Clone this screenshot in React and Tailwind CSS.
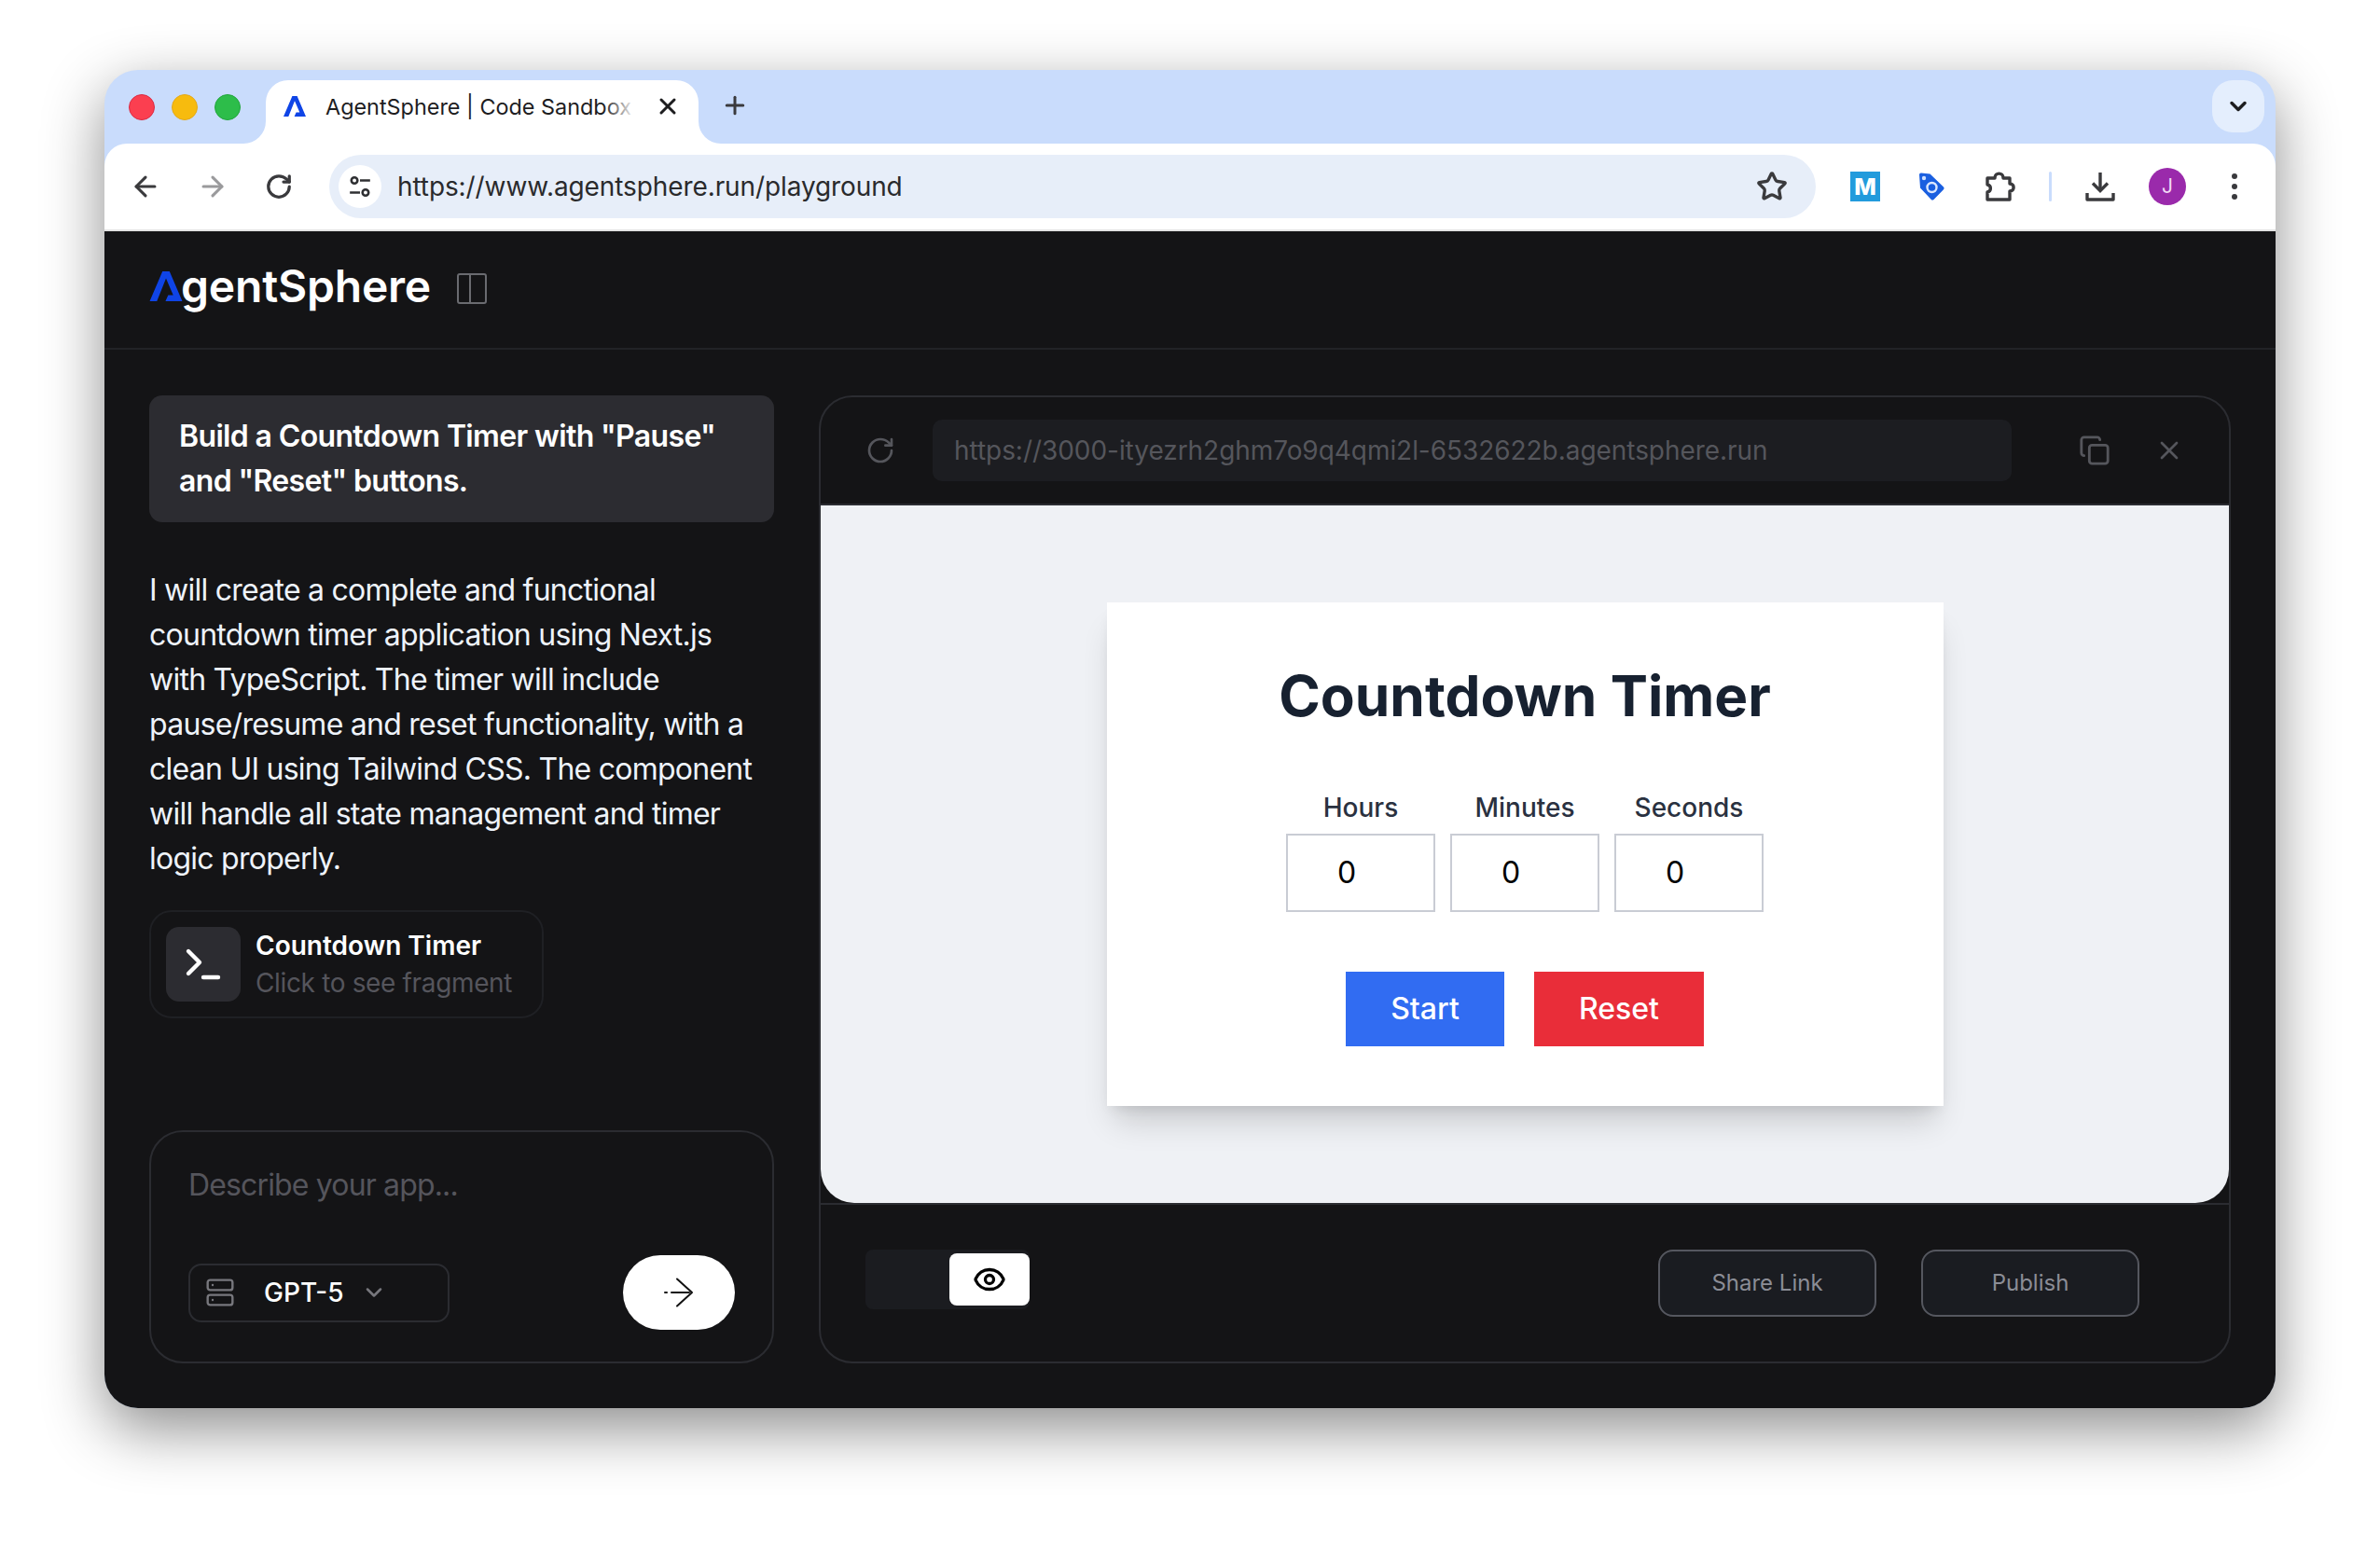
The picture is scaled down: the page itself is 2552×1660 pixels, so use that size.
import React from "react";
import { ArrowLeft, ArrowRight, RotateCw, Star, Copy, X, Terminal, Server, ChevronDown, Eye, Plus } from "lucide-react";

const LogoA = ({ className }) => (
  <svg viewBox="0 0 24 22" className={className} fill="#0f44e6">
    <path d="M9.4 0H14.6L24 22H11.6L13.6 17.6H17.3L12 5.2L5.3 22H0Z" />
  </svg>
);

const Tune = () => (
  <svg viewBox="0 0 24 24" className="w-[26px] h-[26px]" fill="none" stroke="#2f3033" strokeWidth="2.4">
    <circle cx="6.5" cy="6" r="3" />
    <path d="M12 6H22" />
    <circle cx="17.5" cy="18" r="3" />
    <path d="M2 18H12" />
  </svg>
);

const TagIcon = () => (
  <svg viewBox="0 0 32 32" className="w-[32px] h-[32px]">
    <path d="M3 3.5C3 2.5 4 1.5 5 1.6L14.5 2.5L29 16.5C29.8 17.3 29.8 18.4 29 19.2L18.5 30C17.7 30.8 16.5 30.8 15.8 30L4 17.5Z" fill="#1a5fe0" />
    <circle cx="8" cy="7" r="2.2" fill="#cfe0ff" />
    <circle cx="16.5" cy="17" r="5" fill="none" stroke="#dbe7ff" strokeWidth="2.4" />
  </svg>
);

const Puzzle = () => (
  <svg viewBox="0 0 34 34" className="w-[34px] h-[34px]" fill="none" stroke="#3a3a3d" strokeWidth="3.4" strokeLinejoin="round">
    <path d="M3 8H11C11 1.5 20 1.5 20 8H27V14C32.5 14 32.5 22 27 22V31H3V23C7.5 22 7.5 16 3 15Z" />
  </svg>
);

const DownloadIcon = () => (
  <svg viewBox="0 0 34 34" className="w-[34px] h-[34px]" fill="none" stroke="#3a3a3d" strokeWidth="3.4">
    <path d="M17 2V20" />
    <path d="M9 13.5L17 21.5L25 13.5" />
    <path d="M3 24V31H31V24" strokeLinejoin="round" />
  </svg>
);

const SendArrow = () => (
  <svg viewBox="0 0 32 32" className="w-[32px] h-[32px]" fill="none" stroke="#111" strokeWidth="2" strokeLinecap="round" strokeLinejoin="round">
    <path d="M14 1.5L30 16L14 30.5" />
    <path d="M1 16H3" />
    <path d="M8 16H27" />
  </svg>
);

const PanelIcon = () => (
  <svg viewBox="0 0 32 33" className="w-[32px] h-[33px]" fill="none" stroke="#6a6b70" strokeWidth="2">
    <rect x="1" y="1" width="30" height="31" rx="2" />
    <path d="M14 1V32" />
  </svg>
);

function TimerField({ label }) {
  return (
    <div className="w-[160px] flex flex-col items-center">
      <div className="text-[28px] leading-[32px] font-medium text-[#2a3140]">{label}</div>
      <div className="mt-[12px] w-[160px] h-[84px] bg-white border-2 border-[#c9ccd4] flex items-center pl-[53px] text-[32px] text-black">0</div>
    </div>
  );
}

export default function App() {
  return (
    <div className="w-[2552px] h-[1660px] bg-white overflow-hidden pt-[75px] pl-[112px] [font-family:Inter,sans-serif]">
      <div className="w-[2328px] h-[1435px] rounded-[36px] overflow-hidden bg-[#c9dcfc] shadow-[0_22px_65px_rgba(0,0,0,0.45)] flex flex-col">
        {/* tab strip */}
        <div className="h-[79px] shrink-0 flex items-start pl-[26px] pr-[12px] pt-[11px]">
          <div className="flex gap-[18px] mt-[15px]">
            <div className="w-[28px] h-[28px] rounded-full bg-[#fb3f50] border border-[#d92c45]" />
            <div className="w-[28px] h-[28px] rounded-full bg-[#f7bb0e] border border-[#e3a81a]" />
            <div className="w-[28px] h-[28px] rounded-full bg-[#2dbd4a] border border-[#22a53c]" />
          </div>
          <div className="relative ml-[27px] w-[464px] h-[68px] bg-white rounded-t-[24px] flex items-start pt-[17px] pl-[19px]">
            <div className="absolute left-[-24px] bottom-0 w-[24px] h-[24px] bg-white">
              <div className="w-full h-full bg-[#c9dcfc] rounded-br-[24px]" />
            </div>
            <div className="absolute right-[-24px] bottom-0 w-[24px] h-[24px] bg-white">
              <div className="w-full h-full bg-[#c9dcfc] rounded-bl-[24px]" />
            </div>
            <LogoA className="w-[24px] h-[22px] shrink-0" />
            <div className="relative ml-[21px] w-[332px] h-[26px] whitespace-nowrap text-[23.4px] leading-[24px] text-[#1d1d1f]">
              AgentSphere | Code Sandbox
              <div className="absolute right-0 top-0 h-full w-[34px] bg-gradient-to-r from-transparent to-white" />
            </div>
            <X className="ml-[21px] mt-[-3px] w-[28px] h-[28px] shrink-0 text-[#1d1d1f]" strokeWidth={2.6} />
          </div>
          <Plus className="ml-[24px] mt-[12px] w-[30px] h-[30px] text-[#3a3a3d]" strokeWidth={2.4} />
          <div className="ml-auto w-[56px] h-[56px] rounded-[22px] bg-[#e4eefd] flex items-center justify-center">
            <ChevronDown className="w-[28px] h-[28px] text-[#1d1d1f]" strokeWidth={3} />
          </div>
        </div>

        {/* toolbar */}
        <div className="h-[94px] shrink-0 bg-white rounded-t-[24px] border-b-2 border-[#e3e3e3] flex items-center">
          <div className="w-[241px] pl-[27px] flex items-center gap-[38px] shrink-0">
            <ArrowLeft className="w-[34px] h-[34px] text-[#3a3a3d]" strokeWidth={2.2} />
            <ArrowRight className="w-[34px] h-[34px] text-[#9a9a9c]" strokeWidth={2.2} />
            <RotateCw className="ml-[1px] w-[30px] h-[30px] text-[#3a3a3d]" strokeWidth={2.6} />
          </div>
          <div className="w-[1594px] h-[68px] shrink-0 rounded-full bg-[#e7eef9] flex items-center pl-[10px] pr-[30px]">
            <div className="w-[46px] h-[46px] rounded-full bg-white flex items-center justify-center shrink-0">
              <Tune />
            </div>
            <div className="ml-[17px] text-[28px] text-[#2a2a2c] whitespace-nowrap tracking-[-0.1px]">https://www.agentsphere.run/playground</div>
            <Star className="ml-auto w-[34px] h-[34px] text-[#3a3a3d]" strokeWidth={2.4} />
          </div>
          <div className="flex items-center ml-[37px]">
            <div className="w-[32px] h-[32px] bg-[#229bdc] flex items-center justify-center text-white font-extrabold text-[25px] leading-none">M</div>
            <div className="ml-[39px]"><TagIcon /></div>
            <div className="ml-[41px]"><Puzzle /></div>
            <div className="ml-[35px] w-[3px] h-[32px] bg-[#c9dcfc] rounded-full" />
            <div className="ml-[35px]"><DownloadIcon /></div>
            <div className="ml-[35px] w-[40px] h-[40px] rounded-full bg-[#9a2aab] flex items-center justify-center text-[#f1d9f5] text-[21px]">J</div>
            <div className="ml-[49px] flex flex-col gap-[5px]">
              <div className="w-[6px] h-[6px] rounded-full bg-[#3a3a3d]" />
              <div className="w-[6px] h-[6px] rounded-full bg-[#3a3a3d]" />
              <div className="w-[6px] h-[6px] rounded-full bg-[#3a3a3d]" />
            </div>
          </div>
        </div>

        {/* app */}
        <div className="flex-1 min-h-0 bg-[#141416] flex flex-col">
          <div className="h-[127px] shrink-0 border-b-2 border-[#222327] flex items-center pl-[48px] pb-[3px]">
            <LogoA className="w-[36px] h-[32px] shrink-0 mt-[-4px]" />
            <div className="ml-[-2px] text-[48px] leading-[60px] font-semibold text-white tracking-[-0.2px] mt-[-4px]">gentSphere</div>
            <div className="ml-[28px]"><PanelIcon /></div>
          </div>

          <div className="flex-1 min-h-0 flex gap-[48px] pt-[49px] pb-[48px] pl-[48px] pr-[48px]">
            {/* left */}
            <div className="w-[670px] shrink-0 flex flex-col">
              <div className="h-[136px] rounded-[14px] bg-[#2c2c31] px-[32px] py-[20px] text-[32px] leading-[48px] font-semibold text-white tracking-[-0.65px]">
                Build a Countdown Timer with "Pause" and "Reset" buttons.
              </div>
              <div className="mt-[49px] text-[32px] leading-[48px] text-[#eef3fa] tracking-[-0.75px] w-[660px]">
                I will create a complete and functional countdown timer application using Next.js with TypeScript. The timer will include pause/resume and reset functionality, with a clean UI using Tailwind CSS. The component will handle all state management and timer logic properly.
              </div>
              <div className="mt-[31px] w-[423px] h-[116px] rounded-[24px] border-2 border-[#1f2024] flex items-center pl-[16px]">
                <div className="w-[80px] h-[80px] rounded-[14px] bg-[#2c2c31] flex items-center justify-center shrink-0">
                  <Terminal className="w-[48px] h-[48px] text-white" strokeWidth={2.2} />
                </div>
                <div className="ml-[16px] flex flex-col">
                  <div className="text-[28px] leading-[40px] font-semibold text-white">Countdown Timer</div>
                  <div className="text-[28px] leading-[40px] text-[#55555c] tracking-[-0.35px]">Click to see fragment</div>
                </div>
              </div>
              <div className="mt-auto h-[250px] rounded-[36px] border-2 border-[#2b2c31] flex flex-col pl-[40px] pr-[40px]">
                <div className="mt-[37px] text-[32px] leading-[40px] text-[#55555c] tracking-[-0.85px]">Describe your app...</div>
                <div className="mt-auto mb-[34px] flex items-center justify-between">
                  <div className="w-[280px] h-[63px] rounded-[14px] border-2 border-[#2b2c31] flex items-center pl-[16px]">
                    <Server className="w-[32px] h-[32px] text-[#77777d]" strokeWidth={1.8} />
                    <div className="ml-[31px] text-[28px] font-medium text-white">GPT-5</div>
                    <ChevronDown className="ml-[18px] w-[28px] h-[28px] text-[#77777d]" strokeWidth={2.2} />
                  </div>
                  <div className="w-[120px] h-[80px] rounded-[40px] bg-white flex items-center justify-center">
                    <SendArrow />
                  </div>
                </div>
              </div>
            </div>

            {/* right */}
            <div className="flex-1 min-w-0 rounded-[36px] border-2 border-[#2b2c31] flex flex-col">
              <div className="h-[116px] shrink-0 flex items-center pl-[48px] border-b-2 border-[#2b2c31]">
                <RotateCw className="w-[32px] h-[32px] text-[#55565c]" strokeWidth={2} />
                <div className="ml-[40px] w-[1157px] h-[66px] rounded-[10px] bg-[#1c1d21] flex items-center pl-[23px] text-[28px] text-[#55565c] whitespace-nowrap tracking-[-0.05px]">
                  https://3000-ityezrh2ghm7o9q4qmi2l-6532622b.agentsphere.run
                </div>
                <Copy className="ml-[72px] w-[34px] h-[34px] text-[#55565c]" strokeWidth={2} />
                <X className="ml-[47px] w-[32px] h-[32px] text-[#55565c]" strokeWidth={2} />
              </div>
              <div className="flex-1 min-h-0 bg-[#eff1f5] rounded-b-[36px] flex items-center justify-center">
                <div className="w-[897px] h-[540px] bg-white shadow-[0_24px_32px_-8px_rgba(0,0,0,0.16),0_8px_14px_-6px_rgba(0,0,0,0.1)] flex flex-col items-center">
                  <div className="mt-[61px] text-[60.3px] leading-[80px] font-bold text-[#172130]">Countdown Timer</div>
                  <div className="mt-[63px] flex gap-[16px]">
                    <TimerField label="Hours" />
                    <TimerField label="Minutes" />
                    <TimerField label="Seconds" />
                  </div>
                  <div className="mt-[64px] flex gap-[32px]">
                    <div className="w-[170px] h-[80px] bg-[#316cf2] text-white text-[32px] font-medium flex items-center justify-center">Start</div>
                    <div className="w-[182px] h-[80px] bg-[#e92d39] text-white text-[32px] font-medium flex items-center justify-center">Reset</div>
                  </div>
                </div>
              </div>
              <div className="h-[170px] shrink-0 border-t-2 border-[#2b2c31] flex items-start pl-[48px] pr-[96px] pt-[48px]">
                <div className="w-[176px] h-[64px] rounded-[8px] bg-[#1b1c20] py-[4px] flex justify-end">
                  <div className="w-[86px] h-[56px] rounded-[8px] bg-white flex items-center justify-center">
                    <Eye className="w-[36px] h-[36px] text-black" strokeWidth={2.2} />
                  </div>
                </div>
                <div className="ml-auto flex gap-[48px]">
                  <div className="w-[234px] h-[72px] rounded-[16px] bg-[#1a1c21] border-2 border-[#55575f] text-[24px] text-[#8b8d96] flex items-center justify-center">Share Link</div>
                  <div className="w-[234px] h-[72px] rounded-[16px] bg-[#1a1c21] border-2 border-[#55575f] text-[24px] text-[#8b8d96] flex items-center justify-center">Publish</div>
                </div>
              </div>
            </div>
          </div>
        </div>
      </div>
    </div>
  );
}
